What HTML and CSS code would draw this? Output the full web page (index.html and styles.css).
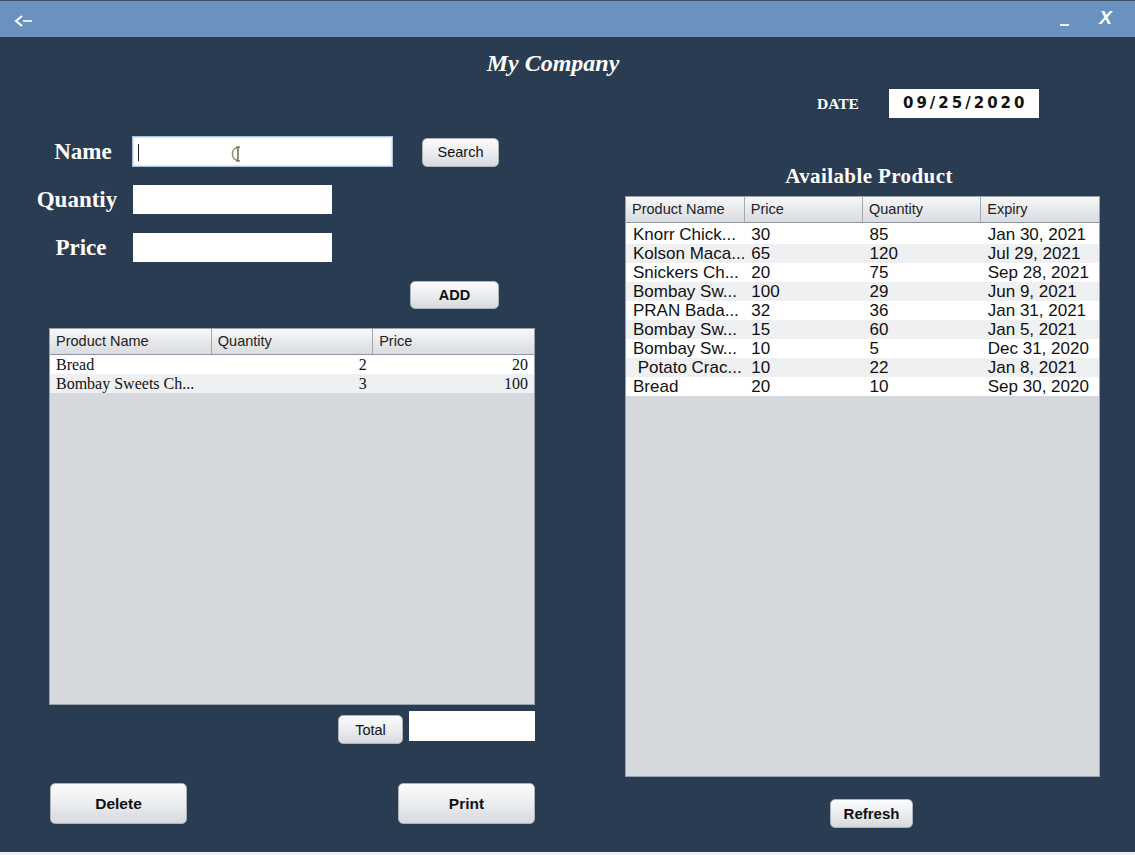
FILE: index.html
```html
<!DOCTYPE html>
<html>
<head>
<meta charset="utf-8">
<link rel="stylesheet" href="styles.css">
</head>
<body>
<div class="window">
  <div class="titlebar">
    <svg class="back" width="20" height="14" viewBox="0 0 20 14"><path d="M8 2 L2 7 L8 12" fill="none" stroke="#fff" stroke-width="2"/><path d="M9 7 H18" stroke="#fff" stroke-width="1.6"/></svg>
    <div class="spacer"></div>
    <span class="min"></span>
    <span class="close">X</span>
  </div>
  <div class="company">My Company</div>
  <div class="content">
    <div class="left">
      <div class="frow">
        <div class="flabel lname">Name</div>
        <div class="inp name-inp">
          <span class="caret"></span>
          <svg class="ibeam" width="14" height="20" viewBox="0 0 14 20"><path d="M8 4 C2 4 2 16 8 16" fill="none" stroke="#9a9560" stroke-width="1.6"/><path d="M7 3 H11 M9 3 V17 M7 17 H11" fill="none" stroke="#4a4630" stroke-width="1.2"/></svg>
        </div>
        <button class="btn search">Search</button>
      </div>
      <div class="frow r2">
        <div class="flabel lqty">Quantiy</div>
        <div class="inp short"></div>
      </div>
      <div class="frow r3">
        <div class="flabel">Price</div>
        <div class="inp short"></div>
      </div>
      <button class="btn bold add">ADD</button>
      <div class="tbl cart">
        <table>
          <thead><tr><th>Product Name</th><th>Quantity</th><th>Price</th></tr></thead>
          <tbody>
            <tr><td>Bread</td><td class="num">2</td><td class="num">20</td></tr>
            <tr class="alt"><td>Bombay Sweets Ch...</td><td class="num">3</td><td class="num">100</td></tr>
          </tbody>
        </table>
      </div>
      <div class="totalrow">
        <button class="btn total">Total</button>
        <div class="totalfield"></div>
      </div>
      <div class="actions">
        <button class="btn bold big">Delete</button>
        <button class="btn bold big print">Print</button>
      </div>
    </div>
    <div class="right">
      <div class="daterow">
        <div class="datelabel">DATE</div>
        <div class="datebox">09/25/2020</div>
      </div>
      <div class="avail">Available Product</div>
      <div class="tbl products">
        <table>
          <thead><tr><th>Product Name</th><th>Price</th><th>Quantity</th><th>Expiry</th></tr></thead>
          <tbody>
            <tr class="first"><td>Knorr Chick...</td><td>30</td><td>85</td><td>Jan 30, 2021</td></tr>
            <tr class="alt"><td>Kolson Maca...</td><td>65</td><td>120</td><td>Jul 29, 2021</td></tr>
            <tr><td>Snickers Ch...</td><td>20</td><td>75</td><td>Sep 28, 2021</td></tr>
            <tr class="alt"><td>Bombay Sw...</td><td>100</td><td>29</td><td>Jun 9, 2021</td></tr>
            <tr><td>PRAN Bada...</td><td>32</td><td>36</td><td>Jan 31, 2021</td></tr>
            <tr class="alt"><td>Bombay Sw...</td><td>15</td><td>60</td><td>Jan 5, 2021</td></tr>
            <tr><td>Bombay Sw...</td><td>10</td><td>5</td><td>Dec 31, 2020</td></tr>
            <tr class="alt"><td>&nbsp;Potato Crac...</td><td>10</td><td>22</td><td>Jan 8, 2021</td></tr>
            <tr><td>Bread</td><td>20</td><td>10</td><td>Sep 30, 2020</td></tr>
          </tbody>
        </table>
      </div>
      <button class="btn bold refresh">Refresh</button>
    </div>
  </div>
</div>
</body>
</html>
```
FILE: styles.css
```css
* { box-sizing: border-box; }
html, body { margin: 0; padding: 0; }
body { background: #2a3c51; }
.window {
  width: 1135px;
  height: 855px;
  background: #2a3c51;
  display: flex;
  flex-direction: column;
  border-bottom: 3px solid #eef0f3;
  overflow: hidden;
}
.titlebar {
  height: 37px;
  flex: none;
  background: #6a92bf;
  border-top: 1px solid #3d4d62;
  display: flex;
  align-items: center;
  padding-left: 14px;
  padding-right: 23px;
}
.back { display: block; margin-top: 3px; }
.spacer { flex: 1; }
.min {
  width: 9px;
  height: 2px;
  background: #f2f5fa;
  margin-top: 12px;
  margin-right: 30px;
}
.close {
  font-family: "Liberation Sans", Arial, sans-serif;
  font-weight: bold;
  font-style: italic;
  font-size: 19px;
  color: #fff;
  margin-top: -3px;
}
.company {
  font-family: "Liberation Serif", "Times New Roman", serif;
  font-weight: bold;
  font-style: italic;
  font-size: 24px;
  line-height: 26px;
  color: #fff;
  text-align: center;
  padding-right: 29px;
  margin-top: 13px;
  margin-bottom: 13px;
}
.content {
  flex: 1;
  display: grid;
  grid-template-columns: 560px 1fr;
}
.left {
  padding-top: 47px;
  padding-left: 30px;
  display: flex;
  flex-direction: column;
  align-items: flex-start;
}
.frow { display: flex; align-items: center; }
.frow.r2 { margin-top: 18px; }
.frow.r3 { margin-top: 19px; }
.flabel {
  width: 102px;
  text-align: center;
  font-family: "Liberation Serif", "Times New Roman", serif;
  font-weight: bold;
  font-size: 23px;
  color: #fff;
}
.flabel.lname { padding-left: 4px; }
.flabel.lqty { padding-right: 8px; }
.inp {
  background: #fff;
  height: 29px;
}
.inp.short { width: 199px; margin-left: 1px; }
.name-inp {
  width: 261px;
  height: 31px;
  border: 1px solid #a9c4e2;
  box-shadow: inset 0 0 0 1px #dce8f5;
  position: relative;
}
.caret {
  position: absolute;
  left: 5px;
  top: 7px;
  width: 1px;
  height: 17px;
  background: #222;
}
.ibeam { position: absolute; left: 96px; top: 7px; }
.btn {
  font-family: "Liberation Sans", Arial, sans-serif;
  font-size: 14.5px;
  color: #111;
  background: linear-gradient(#fcfcfd, #e9ebee 55%, #d6d9dd);
  border: 1px solid #aeb3ba;
  border-radius: 5px;
  padding: 0;
  cursor: default;
}
.btn.bold { font-weight: bold; }
.search { width: 77px; height: 29px; margin-left: 29px; margin-top: 1px; }
.add { width: 89px; height: 28px; margin-left: 380px; margin-top: 19px; font-size: 14.5px; }
.tbl {
  background: #d5d8dd;
  border: 1px solid #9aa1aa;
  overflow: hidden;
}
.tbl table {
  width: 100%;
  border-collapse: collapse;
  table-layout: fixed;
}
.tbl th {
  height: 25px;
  padding: 0 0 0 6px;
  text-align: left;
  font-family: "Liberation Sans", Arial, sans-serif;
  font-weight: normal;
  font-size: 14.5px;
  color: #222;
  background: linear-gradient(#f7f8f9, #e4e6e9 60%, #d9dce0);
  border-right: 1px solid #a3a9b1;
  border-bottom: 1px solid #8f969f;
}
.tbl th:last-child { border-right: none; }
.tbl td {
  height: 19px;
  padding: 0 6px;
  color: #111;
  background: #fff;
  white-space: nowrap;
  overflow: hidden;
}
.tbl tr.alt td { background: #eff0f2; }
.cart {
  width: 486px;
  height: 377px;
  margin-left: 19px;
  margin-top: 19px;
}
.cart td {
  font-family: "Liberation Serif", "Times New Roman", serif;
  font-size: 16px;
  line-height: 19px;
}
.cart td.num { text-align: right; }
.totalrow { display: flex; align-items: flex-start; margin-top: 6px; }
.total { width: 65px; height: 29px; margin-left: 308px; margin-top: 4px; }
.totalfield { width: 126px; height: 30px; margin-left: 6px; background: #fff; }
.actions { display: flex; margin-top: 39px; margin-left: 20px; }
.big { width: 137px; height: 41px; font-size: 15.5px; }
.print { margin-left: 211px; }
.right {
  padding-left: 65px;
  display: flex;
  flex-direction: column;
  align-items: flex-start;
}
.daterow { display: flex; align-items: center; height: 29px; }
.datelabel {
  width: 264px;
  padding-left: 192px;
  font-family: "Liberation Serif", "Times New Roman", serif;
  font-weight: bold;
  font-size: 15.5px;
  color: #fff;
}
.datebox {
  width: 150px;
  height: 29px;
  background: #fff;
  font-family: "DejaVu Sans", Verdana, sans-serif;
  font-weight: bold;
  font-size: 15px;
  letter-spacing: 3px;
  color: #111;
  line-height: 29px;
  padding-left: 14px;
}
.avail {
  width: 475px;
  padding-left: 13px;
  text-align: center;
  margin-top: 45px;
  font-family: "Liberation Serif", "Times New Roman", serif;
  font-weight: bold;
  font-size: 21px;
  letter-spacing: 0.4px;
  line-height: 26px;
  color: #fff;
}
.products {
  width: 475px;
  height: 581px;
  margin-top: 7px;
}
.products td {
  font-family: "Liberation Sans", Arial, sans-serif;
  font-size: 17px;
  line-height: 19px;
  padding-left: 7px;
}
.products tr.first td { height: 21px; padding-top: 2px; }
.refresh { width: 83px; height: 29px; margin-top: 22px; margin-left: 205px; font-size: 15px; }
```
